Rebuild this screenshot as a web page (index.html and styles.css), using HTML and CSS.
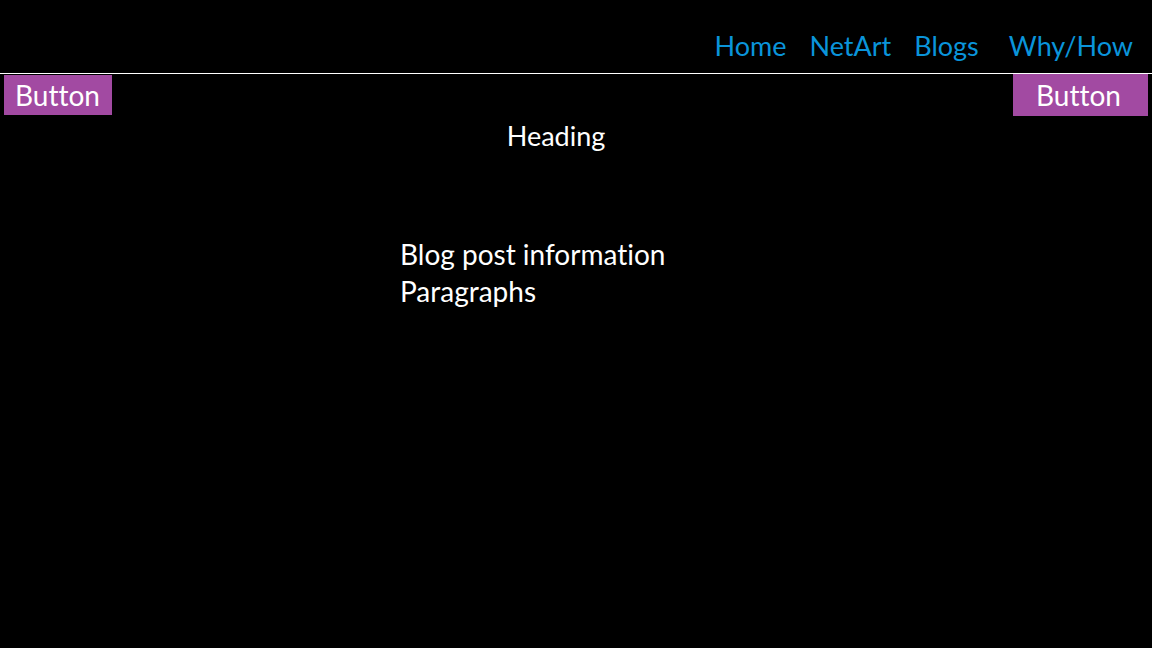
FILE: index.html
```html
<!DOCTYPE html>
<html lang="en">
<head>
<meta charset="utf-8">
<title>Blog</title>
<link rel="stylesheet" href="styles.css">
</head>
<body>
<header class="header">
  <nav class="nav">
    <a class="nav-link" href="#">Home</a>
    <a class="nav-link" href="#">NetArt</a>
    <a class="nav-link" href="#">Blogs</a>
    <a class="nav-link nav-link-last" href="#">Why/How</a>
  </nav>
</header>
<div class="button-row">
  <button class="btn btn-left">Button</button>
  <button class="btn btn-right">Button</button>
</div>
<main class="content">
  <h1 class="heading">Heading</h1>
  <div class="post">
    <p class="post-line">Blog post information</p>
    <p class="post-line">Paragraphs</p>
  </div>
</main>
</body>
</html>
```
FILE: styles.css
```css
html, body {
  margin: 0;
  padding: 0;
  background: #000;
  height: 100%;
}
body {
  font-family: Lato, "Open Sans", sans-serif;
  font-variant-ligatures: none;
  color: #fff;
}
.header {
  padding-top: 31px;
  padding-right: 19px;
  border-bottom: 1px solid #fff;
  height: 42px;
}
.nav {
  display: flex;
  justify-content: flex-end;
  gap: 23px;
}
.nav-link {
  color: #0a94da;
  text-decoration: none;
  font-size: 27px;
  line-height: 30px;
}
.nav-link-last {
  margin-left: 7px;
}
.button-row {
  display: flex;
  justify-content: space-between;
  align-items: flex-start;
  padding: 0 4px;
}
.btn {
  border: none;
  margin: 0;
  background: #a24aa2;
  color: #fff;
  font-family: Lato, "Open Sans", sans-serif;
  font-variant-ligatures: none;
  font-size: 28px;
  text-align: left;
  cursor: pointer;
}
.btn-left {
  width: 108px;
  height: 40px;
  margin-top: 1px;
  padding: 1px 0 0 11px;
  line-height: 39px;
}
.btn-right {
  width: 135px;
  height: 42px;
  padding: 0 0 0 23px;
  line-height: 42px;
}
.content {
  margin-left: 400px;
  width: 312px;
}
.heading {
  margin: 5px 0 0;
  font-size: 27px;
  line-height: 30px;
  font-weight: normal;
  text-align: center;
}
.post {
  margin-top: 85px;
}
.post-line {
  margin: 0;
  font-size: 28px;
  line-height: 37px;
  white-space: nowrap;
}
```
